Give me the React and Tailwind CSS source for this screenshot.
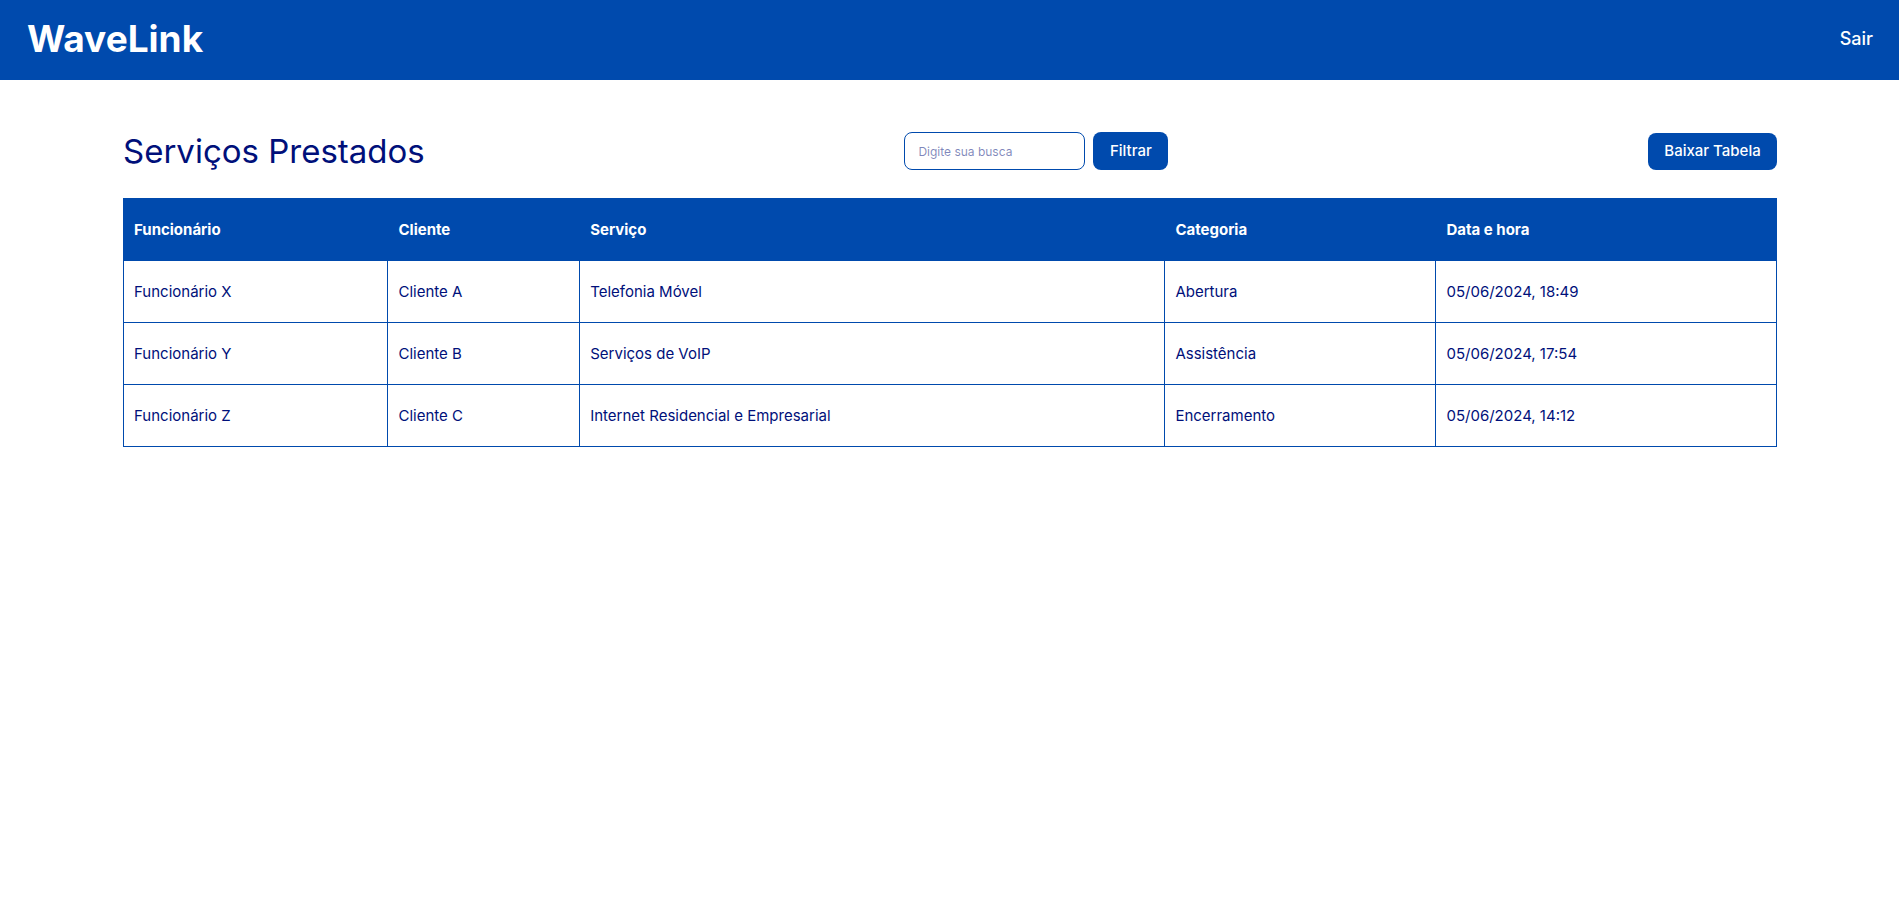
const columns = [
  { label: "Funcionário", width: "w-[16%]" },
  { label: "Cliente", width: "w-[11.6%]" },
  { label: "Serviço", width: "w-[35.4%]" },
  { label: "Categoria", width: "w-[16.4%]" },
  { label: "Data e hora", width: "w-[20.6%]" },
];

const rows = [
  ["Funcionário X", "Cliente A", "Telefonia Móvel", "Abertura", "05/06/2024, 18:49"],
  ["Funcionário Y", "Cliente B", "Serviços de VoIP", "Assistência", "05/06/2024, 17:54"],
  ["Funcionário Z", "Cliente C", "Internet Residencial e Empresarial", "Encerramento", "05/06/2024, 14:12"],
];

function Header() {
  return (
    <header className="flex h-20 items-center justify-between bg-[#004aad] pr-[26px] pb-[3px] pl-[27px] text-white">
      <a href="#" className="text-[37px] font-bold">WaveLink</a>
      <a href="#" className="text-[18px] font-medium">Sair</a>
    </header>
  );
}

function Toolbar() {
  return (
    <div className="flex items-center justify-between">
      <h1 className="text-[33px] leading-[38px] font-normal">Serviços Prestados</h1>
      <form className="flex gap-2" onSubmit={(e) => e.preventDefault()}>
        <input
          type="text"
          aria-label="Digite sua busca"
          placeholder="Digite sua busca"
          className="h-[38px] w-[181px] rounded-lg border border-[#004aad] px-[13px] text-[12px] placeholder:text-[#00107a]/50"
        />
        <button type="submit" className="h-[38px] w-[75px] rounded-lg bg-[#004aad] text-[15px] font-medium text-white">
          Filtrar
        </button>
      </form>
      <button type="button" className="h-[37px] w-[129px] rounded-lg bg-[#004aad] text-[15px] font-medium text-white">
        Baixar Tabela
      </button>
    </div>
  );
}

function ServicesTable() {
  return (
    <table className="w-full table-fixed border-collapse text-left text-[15px]">
      <thead className="bg-[#004aad] text-white">
        <tr className="h-[62px]">
          {columns.map((c) => (
            <th key={c.label} scope="col" className={`${c.width} border border-[#004aad] px-[10px] pt-[2px] font-bold`}>
              {c.label}
            </th>
          ))}
        </tr>
      </thead>
      <tbody>
        {rows.map((row) => (
          <tr key={row[0]} className="h-[62px]">
            {row.map((cell) => (
              <td key={cell} className="border border-[#004aad] px-[10px] pt-[2px]">{cell}</td>
            ))}
          </tr>
        ))}
      </tbody>
    </table>
  );
}

export default function App() {
  return (
    <div className="min-h-screen bg-white font-['Inter',sans-serif] text-[#00107a]">
      <Header />
      <main className="flex flex-col gap-[28px] pt-[52px] pr-[122px] pl-[123px]">
        <Toolbar />
        <ServicesTable />
      </main>
    </div>
  );
}
